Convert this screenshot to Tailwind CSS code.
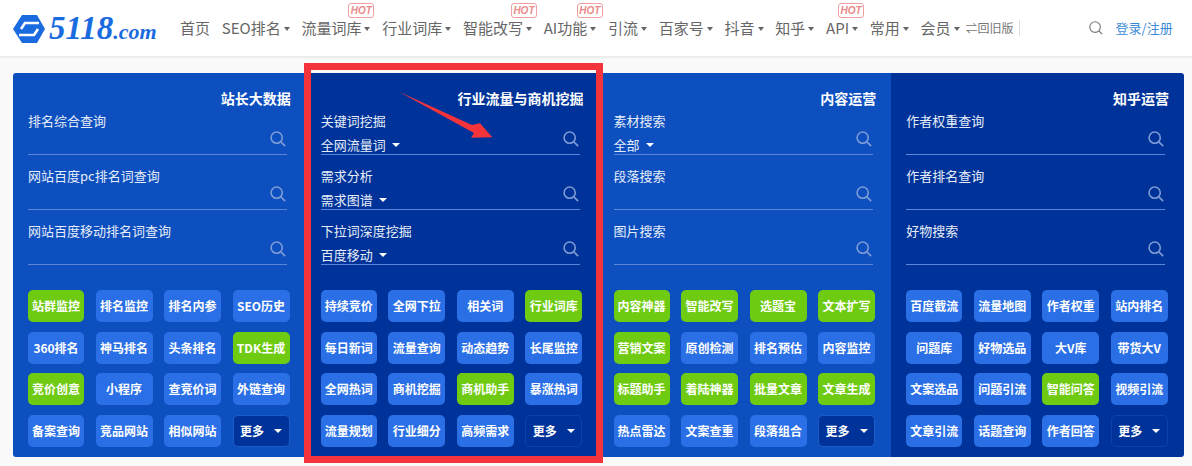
<!DOCTYPE html>
<html lang="zh">
<head>
<meta charset="UTF-8">
<title>5118</title>
<script src="https://cdn.jsdelivr.net/npm/@tailwindcss/browser@4"></script>
</head>
<body class="bg-[#f9f9f9] font-['Noto_Sans_CJK_SC','Noto_Sans',sans-serif] overflow-hidden">
<div class="relative w-[1192px] h-[466px]">

  <!-- 顶部导航 -->
  <header class="h-[58px] bg-white border-b-2 border-[#ececec] flex items-center text-[#666] text-[15px] pl-[13px]">
    <svg class="w-[32px] h-[28px] shrink-0 mb-[-2px]" viewBox="0 0 32 28">
      <path fill="#1a6ae0" d="M9 0h15l8 14-8 14H9L0 14z"/>
      <path fill="none" stroke="#fff" stroke-width="2.6" d="M26 8H12L8 14M6 20h15l4-6"/>
    </svg>
    <span class="ml-[4px] w-[131px] text-[#1a6ae0] font-['Liberation_Serif',serif] font-bold italic text-[33px] leading-none">5118<span class="text-[22px]">.com</span></span>
    <nav class="flex items-center gap-[11.75px] mt-[1px]">
      <a>首页</a>
      <a class="flex items-center">SEO排名<i class="ml-[3px] border-x-[3.5px] border-t-[4px] border-x-transparent border-t-[#666]"></i></a>
      <a class="relative flex items-center">流量词库<i class="ml-[3px] border-x-[3.5px] border-t-[4px] border-x-transparent border-t-[#666]"></i><b class="absolute -top-[14px] left-[47px] w-[26px] h-[15px] rounded-[3px] bg-white border border-[#f0a0a0] text-[#ea8a8a] font-['Liberation_Sans',sans-serif] text-[10px] italic leading-[13px] text-center">HOT</b></a>
      <a class="flex items-center">行业词库<i class="ml-[3px] border-x-[3.5px] border-t-[4px] border-x-transparent border-t-[#666]"></i></a>
      <a class="relative flex items-center">智能改写<i class="ml-[3px] border-x-[3.5px] border-t-[4px] border-x-transparent border-t-[#666]"></i><b class="absolute -top-[14px] left-[48px] w-[26px] h-[15px] rounded-[3px] bg-white border border-[#f0a0a0] text-[#ea8a8a] font-['Liberation_Sans',sans-serif] text-[10px] italic leading-[13px] text-center">HOT</b></a>
      <a class="relative flex items-center">AI功能<i class="ml-[3px] border-x-[3.5px] border-t-[4px] border-x-transparent border-t-[#666]"></i><b class="absolute -top-[14px] left-[33px] w-[26px] h-[15px] rounded-[3px] bg-white border border-[#f0a0a0] text-[#ea8a8a] font-['Liberation_Sans',sans-serif] text-[10px] italic leading-[13px] text-center">HOT</b></a>
      <a class="flex items-center">引流<i class="ml-[3px] border-x-[3.5px] border-t-[4px] border-x-transparent border-t-[#666]"></i></a>
      <a class="flex items-center">百家号<i class="ml-[3px] border-x-[3.5px] border-t-[4px] border-x-transparent border-t-[#666]"></i></a>
      <a class="flex items-center">抖音<i class="ml-[3px] border-x-[3.5px] border-t-[4px] border-x-transparent border-t-[#666]"></i></a>
      <a class="flex items-center">知乎<i class="ml-[3px] border-x-[3.5px] border-t-[4px] border-x-transparent border-t-[#666]"></i></a>
      <a class="relative flex items-center">API<i class="ml-[3px] border-x-[3.5px] border-t-[4px] border-x-transparent border-t-[#666]"></i><b class="absolute -top-[14px] left-[12px] w-[26px] h-[15px] rounded-[3px] bg-white border border-[#f0a0a0] text-[#ea8a8a] font-['Liberation_Sans',sans-serif] text-[10px] italic leading-[13px] text-center">HOT</b></a>
      <a class="flex items-center">常用<i class="ml-[3px] border-x-[3.5px] border-t-[4px] border-x-transparent border-t-[#666]"></i></a>
      <a class="flex items-center">会员<i class="ml-[3px] border-x-[3.5px] border-t-[4px] border-x-transparent border-t-[#666]"></i></a>
    </nav>
    <a class="ml-[6px] pr-[5px] border-r border-[#ddd] text-[12px] leading-[16px] text-[#777] whitespace-nowrap">⇌回旧版</a>
    <svg class="ml-[69px] w-[14px] h-[14px]" viewBox="0 0 15 15" fill="none" stroke="#777" stroke-width="1.2"><circle cx="6.5" cy="6.5" r="5.7"/><path d="M10.7 10.7L14 14"/></svg>
    <a class="ml-[13px] text-[13px] text-[#3b8bd6]">登录/注册</a>
  </header>

  <!-- 四栏面板 -->
  <main class="absolute left-[13px] top-[73px] w-[1171px] h-[384px] rounded-[3px] overflow-hidden grid grid-cols-4 text-white">

    <section class="bg-[#0d4fbf] pt-[14px] px-[15px]">
      <h3 class="text-right text-[14px] font-bold leading-[22px]">站长大数据</h3>
      <div class="h-[156px]">
        <div class="relative h-[46px] border-b border-[#5b86d8] w-[259px] text-[13px] leading-[20px] text-[#e6edf8] pt-[2px]">排名综合查询<svg class="absolute right-[1px] bottom-[7px] w-[16px] h-[16px]" viewBox="0 0 18 18" fill="none" stroke="#7e9cd6" stroke-width="1.8"><circle cx="7.5" cy="7.5" r="6.3"/><path d="M12.2 12.2L17 17"/></svg></div>
        <div class="relative h-[55px] border-b border-[#5b86d8] w-[259px] text-[13px] leading-[20px] text-[#e6edf8] pt-[11px]">网站百度pc排名词查询<svg class="absolute right-[1px] bottom-[7px] w-[16px] h-[16px]" viewBox="0 0 18 18" fill="none" stroke="#7e9cd6" stroke-width="1.8"><circle cx="7.5" cy="7.5" r="6.3"/><path d="M12.2 12.2L17 17"/></svg></div>
        <div class="relative h-[55px] border-b border-[#5b86d8] w-[259px] text-[13px] leading-[20px] text-[#e6edf8] pt-[11px]">网站百度移动排名词查询<svg class="absolute right-[1px] bottom-[7px] w-[16px] h-[16px]" viewBox="0 0 18 18" fill="none" stroke="#7e9cd6" stroke-width="1.8"><circle cx="7.5" cy="7.5" r="6.3"/><path d="M12.2 12.2L17 17"/></svg></div>
      </div>
      <div class="grid grid-cols-[56px_57px_57px_57px] gap-x-[11.5px] gap-y-[9.7px] mt-[25px] text-[12px] font-bold text-center leading-[32px]">
        <a class="h-[32px] rounded-[5px] bg-[#6ecb12]">站群监控</a><a class="h-[32px] rounded-[5px] bg-[#2a6fe6]">排名监控</a><a class="h-[32px] rounded-[5px] bg-[#2a6fe6]">排名内参</a><a class="h-[32px] rounded-[5px] bg-[#2a6fe6]">SEO历史</a>
        <a class="h-[32px] rounded-[5px] bg-[#2a6fe6]">360排名</a><a class="h-[32px] rounded-[5px] bg-[#2a6fe6]">神马排名</a><a class="h-[32px] rounded-[5px] bg-[#2a6fe6]">头条排名</a><a class="h-[32px] rounded-[5px] bg-[#6ecb12]">TDK生成</a>
        <a class="h-[32px] rounded-[5px] bg-[#6ecb12]">竞价创意</a><a class="h-[32px] rounded-[5px] bg-[#2a6fe6]">小程序</a><a class="h-[32px] rounded-[5px] bg-[#2a6fe6]">查竞价词</a><a class="h-[32px] rounded-[5px] bg-[#2a6fe6]">外链查询</a>
        <a class="h-[32px] rounded-[5px] bg-[#2a6fe6]">备案查询</a><a class="h-[32px] rounded-[5px] bg-[#2a6fe6]">竞品网站</a><a class="h-[32px] rounded-[5px] bg-[#2a6fe6]">相似网站</a><a class="h-[32px] rounded-[5px] bg-[#003399] border border-[#1a5cc8] flex items-center justify-center gap-[10px] leading-none">更多<i class="border-x-[4px] border-t-[4px] border-x-transparent border-t-white"></i></a>
      </div>
    </section>

    <section class="bg-[#003399] pt-[14px] px-[15px]">
      <h3 class="text-right text-[14px] font-bold leading-[22px]">行业流量与商机挖掘</h3>
      <div class="h-[156px]">
        <div class="relative h-[46px] border-b border-[#5b86d8] w-[259px] text-[13px] leading-[20px] text-[#e6edf8] pt-[2px]">关键词挖掘<p class="flex items-center mt-[4px]">全网流量词<i class="ml-[6px] border-x-[4px] border-t-[4px] border-x-transparent border-t-white"></i></p><svg class="absolute right-[1px] bottom-[7px] w-[16px] h-[16px]" viewBox="0 0 18 18" fill="none" stroke="#7e9cd6" stroke-width="1.8"><circle cx="7.5" cy="7.5" r="6.3"/><path d="M12.2 12.2L17 17"/></svg></div>
        <div class="relative h-[55px] border-b border-[#5b86d8] w-[259px] text-[13px] leading-[20px] text-[#e6edf8] pt-[11px]">需求分析<p class="flex items-center mt-[4px]">需求图谱<i class="ml-[6px] border-x-[4px] border-t-[4px] border-x-transparent border-t-white"></i></p><svg class="absolute right-[1px] bottom-[7px] w-[16px] h-[16px]" viewBox="0 0 18 18" fill="none" stroke="#7e9cd6" stroke-width="1.8"><circle cx="7.5" cy="7.5" r="6.3"/><path d="M12.2 12.2L17 17"/></svg></div>
        <div class="relative h-[55px] border-b border-[#5b86d8] w-[259px] text-[13px] leading-[20px] text-[#e6edf8] pt-[11px]">下拉词深度挖掘<p class="flex items-center mt-[4px]">百度移动<i class="ml-[6px] border-x-[4px] border-t-[4px] border-x-transparent border-t-white"></i></p><svg class="absolute right-[1px] bottom-[7px] w-[16px] h-[16px]" viewBox="0 0 18 18" fill="none" stroke="#7e9cd6" stroke-width="1.8"><circle cx="7.5" cy="7.5" r="6.3"/><path d="M12.2 12.2L17 17"/></svg></div>
      </div>
      <div class="grid grid-cols-[56px_57px_57px_57px] gap-x-[11.5px] gap-y-[9.7px] mt-[25px] text-[12px] font-bold text-center leading-[32px]">
        <a class="h-[32px] rounded-[5px] bg-[#2a6fe6]">持续竞价</a><a class="h-[32px] rounded-[5px] bg-[#2a6fe6]">全网下拉</a><a class="h-[32px] rounded-[5px] bg-[#2a6fe6]">相关词</a><a class="h-[32px] rounded-[5px] bg-[#6ecb12]">行业词库</a>
        <a class="h-[32px] rounded-[5px] bg-[#2a6fe6]">每日新词</a><a class="h-[32px] rounded-[5px] bg-[#2a6fe6]">流量查询</a><a class="h-[32px] rounded-[5px] bg-[#2a6fe6]">动态趋势</a><a class="h-[32px] rounded-[5px] bg-[#2a6fe6]">长尾监控</a>
        <a class="h-[32px] rounded-[5px] bg-[#2a6fe6]">全网热词</a><a class="h-[32px] rounded-[5px] bg-[#2a6fe6]">商机挖掘</a><a class="h-[32px] rounded-[5px] bg-[#6ecb12]">商机助手</a><a class="h-[32px] rounded-[5px] bg-[#2a6fe6]">暴涨热词</a>
        <a class="h-[32px] rounded-[5px] bg-[#2a6fe6]">流量规划</a><a class="h-[32px] rounded-[5px] bg-[#2a6fe6]">行业细分</a><a class="h-[32px] rounded-[5px] bg-[#2a6fe6]">高频需求</a><a class="h-[32px] rounded-[5px] bg-[#003399] border border-[#0d43a8] flex items-center justify-center gap-[10px] leading-none">更多<i class="border-x-[4px] border-t-[4px] border-x-transparent border-t-white"></i></a>
      </div>
    </section>

    <section class="bg-[#0d4fbf] pt-[14px] px-[15px]">
      <h3 class="text-right text-[14px] font-bold leading-[22px]">内容运营</h3>
      <div class="h-[156px]">
        <div class="relative h-[46px] border-b border-[#5b86d8] w-[259px] text-[13px] leading-[20px] text-[#e6edf8] pt-[2px]">素材搜索<p class="flex items-center mt-[4px]">全部<i class="ml-[6px] border-x-[4px] border-t-[4px] border-x-transparent border-t-white"></i></p><svg class="absolute right-[1px] bottom-[7px] w-[16px] h-[16px]" viewBox="0 0 18 18" fill="none" stroke="#7e9cd6" stroke-width="1.8"><circle cx="7.5" cy="7.5" r="6.3"/><path d="M12.2 12.2L17 17"/></svg></div>
        <div class="relative h-[55px] border-b border-[#5b86d8] w-[259px] text-[13px] leading-[20px] text-[#e6edf8] pt-[11px]">段落搜索<svg class="absolute right-[1px] bottom-[7px] w-[16px] h-[16px]" viewBox="0 0 18 18" fill="none" stroke="#7e9cd6" stroke-width="1.8"><circle cx="7.5" cy="7.5" r="6.3"/><path d="M12.2 12.2L17 17"/></svg></div>
        <div class="relative h-[55px] border-b border-[#5b86d8] w-[259px] text-[13px] leading-[20px] text-[#e6edf8] pt-[11px]">图片搜索<svg class="absolute right-[1px] bottom-[7px] w-[16px] h-[16px]" viewBox="0 0 18 18" fill="none" stroke="#7e9cd6" stroke-width="1.8"><circle cx="7.5" cy="7.5" r="6.3"/><path d="M12.2 12.2L17 17"/></svg></div>
      </div>
      <div class="grid grid-cols-[56px_57px_57px_57px] gap-x-[11.5px] gap-y-[9.7px] mt-[25px] text-[12px] font-bold text-center leading-[32px]">
        <a class="h-[32px] rounded-[5px] bg-[#6ecb12]">内容神器</a><a class="h-[32px] rounded-[5px] bg-[#6ecb12]">智能改写</a><a class="h-[32px] rounded-[5px] bg-[#6ecb12]">选题宝</a><a class="h-[32px] rounded-[5px] bg-[#6ecb12]">文本扩写</a>
        <a class="h-[32px] rounded-[5px] bg-[#6ecb12]">营销文案</a><a class="h-[32px] rounded-[5px] bg-[#2a6fe6]">原创检测</a><a class="h-[32px] rounded-[5px] bg-[#2a6fe6]">排名预估</a><a class="h-[32px] rounded-[5px] bg-[#2a6fe6]">内容监控</a>
        <a class="h-[32px] rounded-[5px] bg-[#6ecb12]">标题助手</a><a class="h-[32px] rounded-[5px] bg-[#6ecb12]">着陆神器</a><a class="h-[32px] rounded-[5px] bg-[#6ecb12]">批量文章</a><a class="h-[32px] rounded-[5px] bg-[#6ecb12]">文章生成</a>
        <a class="h-[32px] rounded-[5px] bg-[#2a6fe6]">热点雷达</a><a class="h-[32px] rounded-[5px] bg-[#2a6fe6]">文案查重</a><a class="h-[32px] rounded-[5px] bg-[#2a6fe6]">段落组合</a><a class="h-[32px] rounded-[5px] bg-[#003399] border border-[#1a5cc8] flex items-center justify-center gap-[10px] leading-none">更多<i class="border-x-[4px] border-t-[4px] border-x-transparent border-t-white"></i></a>
      </div>
    </section>

    <section class="bg-[#003399] pt-[14px] px-[15px]">
      <h3 class="text-right text-[14px] font-bold leading-[22px]">知乎运营</h3>
      <div class="h-[156px]">
        <div class="relative h-[46px] border-b border-[#5b86d8] w-[259px] text-[13px] leading-[20px] text-[#e6edf8] pt-[2px]">作者权重查询<svg class="absolute right-[1px] bottom-[7px] w-[16px] h-[16px]" viewBox="0 0 18 18" fill="none" stroke="#7e9cd6" stroke-width="1.8"><circle cx="7.5" cy="7.5" r="6.3"/><path d="M12.2 12.2L17 17"/></svg></div>
        <div class="relative h-[55px] border-b border-[#5b86d8] w-[259px] text-[13px] leading-[20px] text-[#e6edf8] pt-[11px]">作者排名查询<svg class="absolute right-[1px] bottom-[7px] w-[16px] h-[16px]" viewBox="0 0 18 18" fill="none" stroke="#7e9cd6" stroke-width="1.8"><circle cx="7.5" cy="7.5" r="6.3"/><path d="M12.2 12.2L17 17"/></svg></div>
        <div class="relative h-[55px] border-b border-[#5b86d8] w-[259px] text-[13px] leading-[20px] text-[#e6edf8] pt-[11px]">好物搜索<svg class="absolute right-[1px] bottom-[7px] w-[16px] h-[16px]" viewBox="0 0 18 18" fill="none" stroke="#7e9cd6" stroke-width="1.8"><circle cx="7.5" cy="7.5" r="6.3"/><path d="M12.2 12.2L17 17"/></svg></div>
      </div>
      <div class="grid grid-cols-[56px_57px_57px_57px] gap-x-[11.5px] gap-y-[9.7px] mt-[25px] text-[12px] font-bold text-center leading-[32px]">
        <a class="h-[32px] rounded-[5px] bg-[#2a6fe6]">百度截流</a><a class="h-[32px] rounded-[5px] bg-[#2a6fe6]">流量地图</a><a class="h-[32px] rounded-[5px] bg-[#2a6fe6]">作者权重</a><a class="h-[32px] rounded-[5px] bg-[#2a6fe6]">站内排名</a>
        <a class="h-[32px] rounded-[5px] bg-[#2a6fe6]">问题库</a><a class="h-[32px] rounded-[5px] bg-[#2a6fe6]">好物选品</a><a class="h-[32px] rounded-[5px] bg-[#2a6fe6]">大V库</a><a class="h-[32px] rounded-[5px] bg-[#2a6fe6]">带货大V</a>
        <a class="h-[32px] rounded-[5px] bg-[#2a6fe6]">文案选品</a><a class="h-[32px] rounded-[5px] bg-[#2a6fe6]">问题引流</a><a class="h-[32px] rounded-[5px] bg-[#6ecb12]">智能问答</a><a class="h-[32px] rounded-[5px] bg-[#2a6fe6]">视频引流</a>
        <a class="h-[32px] rounded-[5px] bg-[#2a6fe6]">文章引流</a><a class="h-[32px] rounded-[5px] bg-[#2a6fe6]">话题查询</a><a class="h-[32px] rounded-[5px] bg-[#2a6fe6]">作者回答</a><a class="h-[32px] rounded-[5px] bg-[#003399] border border-[#0d43a8] flex items-center justify-center gap-[10px] leading-none">更多<i class="border-x-[4px] border-t-[4px] border-x-transparent border-t-white"></i></a>
      </div>
    </section>
  </main>

  <!-- 红色标注框和箭头 -->
  <div class="absolute left-[304px] top-[63px] w-[299px] h-[400px] border-[7px] border-[#f5333a] pointer-events-none"></div>
  <svg class="absolute left-[395px] top-[88px] w-[100px] h-[52px] pointer-events-none" viewBox="0 0 100 52"><path fill="#f5333a" d="M4 3.7L77 37 85 35.3 97.3 49.3 76 49.7 79 45z"/></svg>
</div>
</body>
</html>
